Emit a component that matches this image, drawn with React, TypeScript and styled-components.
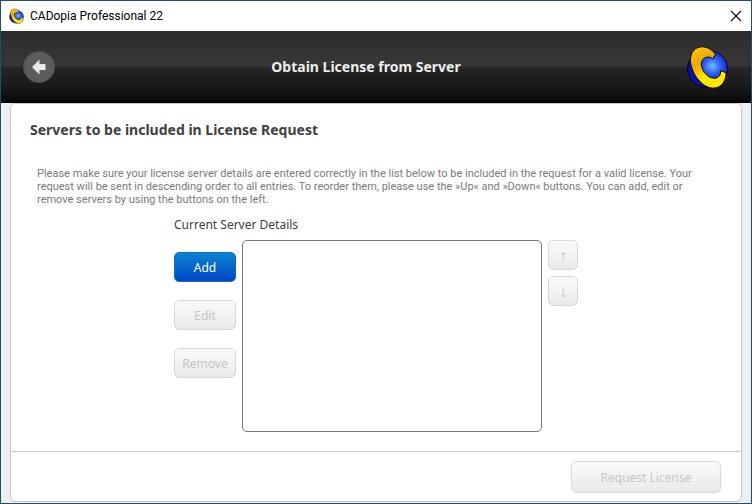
import React from "react";
import styled, { createGlobalStyle } from "styled-components";

const GlobalStyle = createGlobalStyle`
  * { box-sizing: border-box; }
  body { margin: 0; font-family: "Noto Sans", "Open Sans", sans-serif; }
  button, select { font-family: inherit; margin: 0; }
`;

const Window = styled.div`
  display: flex;
  flex-direction: column;
  min-height: 100vh;
  border: 1px solid #1f4e6d;
  border-right-color: #1d4b80;
  background: #eeeeee;
`;

const TitleBar = styled.div`
  display: flex;
  align-items: center;
  height: 30px;
  padding: 0 9px 0 8px;
  background: #ffffff;
`;

const AppName = styled.span`
  flex: 1;
  margin-left: 6px;
  font-family: Roboto, "Open Sans", sans-serif;
  font-size: 12px;
  line-height: 16px;
  color: #000000;
`;

const CloseButton = styled.button`
  display: flex;
  padding: 0;
  border: 0;
  background: none;
`;

const Header = styled.header`
  display: grid;
  grid-template-columns: 32px 1fr 52px;
  align-items: center;
  height: 72px;
  padding: 0 22px;
  background: linear-gradient(#2b2b2b 0%, #383838 48%, #262626 52%, #161616 85%, #060606 100%);
  border-bottom: 1px solid #000000;
`;

const HeaderLogo = styled.div`
  display: flex;
  justify-content: flex-end;
`;

const BackButton = styled.button`
  display: flex;
  align-items: center;
  justify-content: center;
  width: 32px;
  height: 32px;
  padding: 0;
  border: 1px solid #505050;
  border-radius: 50%;
  background: #5c5c5c;
`;

const PageTitle = styled.h1`
  margin: 0;
  font-size: 14px;
  line-height: 20px;
  font-weight: 700;
  text-align: center;
  color: #eeeeee;
`;

const Panel = styled.main`
  flex: 1;
  display: flex;
  flex-direction: column;
  margin: 0 9px 1px;
  border: 1px solid #c8c8cc;
  border-radius: 5px;
  background: #ffffff;
`;

const Content = styled.section`
  flex: 1;
  padding: 16px 19px;
`;

const SectionTitle = styled.h2`
  margin: 0;
  font-size: 14px;
  line-height: 20px;
  font-weight: 700;
  color: #404040;
`;

const Hint = styled.p`
  margin: 27px 22px 0 7px;
  font-family: Roboto, "Open Sans", sans-serif;
  font-size: 11px;
  line-height: 13px;
  color: #7b7b7b;
`;

const Servers = styled.div`
  display: grid;
  grid-template-columns: 62px 300px 30px;
  column-gap: 6px;
  justify-content: center;
  margin-top: 9px;
`;

const ListLabel = styled.label`
  grid-column: 1 / -1;
  margin-bottom: 6px;
  font-size: 12px;
  line-height: 19px;
  color: #404040;
`;

const Actions = styled.div`
  display: flex;
  flex-direction: column;
  gap: 18px;
  padding-top: 12px;
`;

const Ordering = styled.div`
  display: flex;
  flex-direction: column;
  gap: 6px;
`;

const ServerList = styled.select`
  appearance: none;
  width: 100%;
  height: 192px;
  border: 1px solid #777777;
  border-radius: 5px;
  background: #ffffff;
  outline: 0;
`;

const Button = styled.button<{ $primary?: boolean; $large?: boolean }>`
  display: flex;
  align-items: center;
  justify-content: center;
  width: ${(p) => (p.$large ? "150px" : "100%")};
  height: ${(p) => (p.$large ? "32px" : "30px")};
  padding: 2px 0 0;
  border: 1px solid ${(p) => (p.$primary ? "#0a6fc4" : "#dadada")};
  border-radius: 5px;
  background: ${(p) =>
    p.$primary ? "linear-gradient(#0a84d0, #0046c4)" : "linear-gradient(#fbfbfb, #e9e9e9)"};
  color: ${(p) => (p.$primary ? "#ffffff" : "#c6c6c6")};
  font-size: 12px;
  line-height: 16px;
`;

const ArrowButton = styled(Button)`
  font-family: "Liberation Sans", sans-serif;
  font-size: 16px;
`;

const Footer = styled.footer`
  display: flex;
  justify-content: flex-end;
  padding: 9px 20px 8px;
  border-top: 1px solid #c8c8cc;
`;

function Logo({ width, height }: { width: number; height: number }) {
  return (
    <svg width={width} height={height} viewBox="12 14 128 132" aria-hidden="true">
      <defs>
        <radialGradient id="ball" cx="0.62" cy="0.42" r="0.5">
          <stop offset="0" stopColor="#6cc0ff" />
          <stop offset="0.4" stopColor="#2f62f8" />
          <stop offset="0.8" stopColor="#1420d8" />
          <stop offset="1" stopColor="#0a10a8" />
        </radialGradient>
        <linearGradient id="ring" x1="0.2" y1="0" x2="0.7" y2="1">
          <stop offset="0" stopColor="#ffc400" />
          <stop offset="0.35" stopColor="#eda50c" />
          <stop offset="0.65" stopColor="#ffe500" />
          <stop offset="1" stopColor="#ffe900" />
        </linearGradient>
      </defs>
      <ellipse cx="76" cy="86" rx="60" ry="56" fill="url(#ball)" stroke="#00002c" strokeWidth="3" />
      <path
        d="M102 44C88 25 70 17 53 20C33 24 23 42 25 66C29 97 51 132 82 142C110 149 131 130 132 97L115 91Q117 108 102 113C84 117 66 101 60 84C54 67 60 51 78 50Q86 50 93 56L95 48Z"
        fill="url(#ring)"
        stroke="#080808"
        strokeWidth="3"
        strokeLinejoin="round"
      />
    </svg>
  );
}

function BackArrow() {
  return (
    <svg width="16" height="16" viewBox="0 0 16 16" aria-hidden="true">
      <path d="M1 8L8.5 0.5V5H14.5V11H8.5V15.5Z" fill="#e9e9e9" />
    </svg>
  );
}

export default function App() {
  return (
    <Window>
      <GlobalStyle />
      <TitleBar>
        <Logo width={15} height={16} />
        <AppName>CADopia Professional 22</AppName>
        <CloseButton aria-label="Close">
          <svg width="12" height="12" viewBox="0 0 12 12" aria-hidden="true">
            <path d="M1 1L11 11M11 1L1 11" stroke="#111111" strokeWidth="1.2" />
          </svg>
        </CloseButton>
      </TitleBar>
      <Header>
        <BackButton aria-label="Back">
          <BackArrow />
        </BackButton>
        <PageTitle>Obtain License from Server</PageTitle>
        <HeaderLogo>
          <Logo width={43} height={44} />
        </HeaderLogo>
      </Header>
      <Panel>
        <Content>
          <SectionTitle>Servers to be included in License Request</SectionTitle>
          <Hint>
            Please make sure your license server details are entered correctly in the list below to
            be included in the request for a valid license. Your request will be sent in descending
            order to all entries. To reorder them, please use the »Up« and »Down« buttons. You can
            add, edit or remove servers by using the buttons on the left.
          </Hint>
          <Servers>
            <ListLabel htmlFor="servers">Current Server Details</ListLabel>
            <Actions>
              <Button $primary>Add</Button>
              <Button disabled>Edit</Button>
              <Button disabled>Remove</Button>
            </Actions>
            <ServerList id="servers" size={8} />
            <Ordering>
              <ArrowButton disabled aria-label="Up">↑</ArrowButton>
              <ArrowButton disabled aria-label="Down">↓</ArrowButton>
            </Ordering>
          </Servers>
        </Content>
        <Footer>
          <Button $large disabled>Request License</Button>
        </Footer>
      </Panel>
    </Window>
  );
}
